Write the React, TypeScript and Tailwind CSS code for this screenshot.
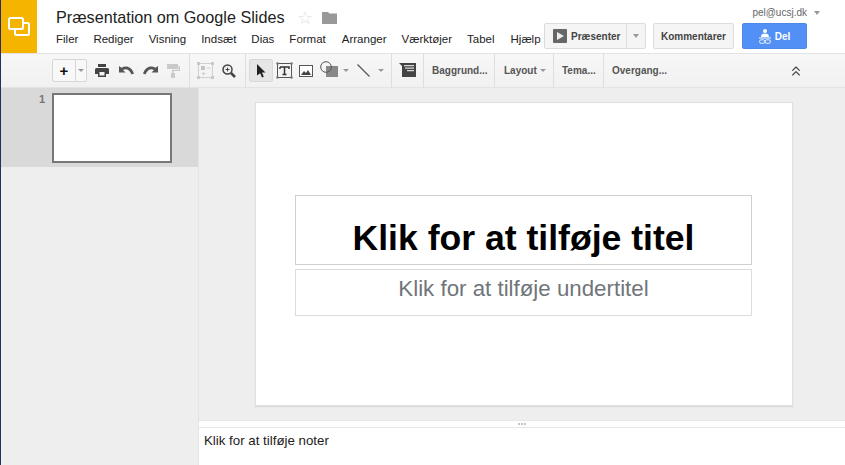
import { ChevronsUp } from 'lucide-react';

const menus: [string, string][] = [
  ['Filer', 'ml-0'],
  ['Rediger', 'ml-[15px]'],
  ['Visning', 'ml-[15px]'],
  ['Indsæt', 'ml-[15px]'],
  ['Dias', 'ml-[15px]'],
  ['Format', 'ml-[15px]'],
  ['Arranger', 'ml-[16px]'],
  ['Værktøjer', 'ml-[15px]'],
  ['Tabel', 'ml-[15px]'],
  ['Hjælp', 'ml-[16px]'],
];

const Caret = ({ className = '' }: { className?: string }) => (
  <span className={`w-0 h-0 border-x-[3px] border-x-transparent border-t-[3px] border-t-[#999] ${className}`} />
);

const Logo = () => (
  <svg width="22" height="20" viewBox="0 0 22 20" fill="none" stroke="#fff" strokeWidth="2">
    <rect x="1" y="1" width="14" height="11" rx="1.5" />
    <path d="M15 6h4.5a1.5 1.5 0 0 1 1.500 1.500v9a1.500 1.500 0 0 1-1.500 1.500h-11a1.500 1.500 0 0 1-1.500-1.500V12" />
  </svg>
);

const PrintIcon = () => (
  <svg width="14" height="13" viewBox="0 0 14 13" fill="#444">
    <path d="M3 0h8v3H3zM1.500 4h11A1.500 1.500 0 0 1 14 5.500V10h-3v3H3v-3H0V5.500A1.500 1.500 0 0 1 1.500 4zM4.500 8v3.500h5V8z" />
  </svg>
);

const UndoIcon = ({ flip = false }: { flip?: boolean }) => (
  <svg width="15" height="9" viewBox="0 0 15 9" fill="#555" className={flip ? '-scale-x-100' : ''}>
    <path d="M0 0v6.500h6.500L4 4c2.800-1.800 6.500-.8 8.500 4.500L15 7.500C12.800 1.200 7.500-1.200 2.500 1.700z" />
  </svg>
);

const PaintIcon = () => (
  <svg width="13" height="14" viewBox="0 0 13 14" fill="#c9c9c9">
    <path d="M0 0h11v5H0zM11.500 2H13v5H6.500v2H8v5H4V9h1V5.700h6.500z" />
  </svg>
);

const SelectBoxIcon = () => (
  <svg width="17" height="17" viewBox="0 0 17 17" fill="none" stroke="#cfcfcf">
    <rect x="1.500" y="1.500" width="14" height="14" />
    <rect x="0" y="0" width="3" height="3" fill="#c8c8c8" stroke="none" />
    <rect x="14" y="0" width="3" height="3" fill="#c8c8c8" stroke="none" />
    <rect x="0" y="14" width="3" height="3" fill="#c8c8c8" stroke="none" />
    <rect x="14" y="14" width="3" height="3" fill="#c8c8c8" stroke="none" />
    <rect x="4" y="4" width="4" height="4" fill="#c4c4c4" stroke="none" />
    <path d="M10 6h3.500M6.500 10v3.500M4.500 11.500h4" />
  </svg>
);

const ZoomIcon = () => (
  <svg width="14" height="14" viewBox="0 0 14 14" fill="none" stroke="#444">
    <circle cx="5.500" cy="5.500" r="4.500" strokeWidth="1.500" />
    <path d="M9 9l4 4" strokeWidth="2.500" />
    <path d="M3.500 5.500h4M5.500 3.500v4" />
  </svg>
);

const CursorIcon = () => (
  <svg width="10" height="14" viewBox="0 0 10 14" fill="#222">
    <path d="M1 0l8.500 8.500H6l1.800 4.200-1.800.8-1.800-4.300L1 11.500z" />
  </svg>
);

const TextBoxIcon = () => (
  <svg width="17" height="17" viewBox="0 0 17 17" fill="none">
    <rect x="1.500" y="1.500" width="14" height="14" stroke="#555" />
    <circle cx="1.500" cy="1.500" r="1.300" fill="#777" />
    <circle cx="15.500" cy="1.500" r="1.300" fill="#777" />
    <circle cx="1.500" cy="15.500" r="1.300" fill="#777" />
    <circle cx="15.500" cy="15.500" r="1.300" fill="#777" />
    <path d="M4 5h9v2M4 7V5M8.500 5v7.500M6.500 12.500h4" stroke="#333" strokeWidth="1.500" />
  </svg>
);

const ImageIcon = () => (
  <svg width="14" height="12" viewBox="0 0 14 12">
    <rect x=".5" y=".5" width="13" height="11" fill="#fff" stroke="#555" />
    <path d="M2 10l3-4 2 2 2-3 3 5z" fill="#444" />
  </svg>
);

const ShapeIcon = () => (
  <svg width="18" height="16" viewBox="0 0 18 16">
    <rect x="6" y="5" width="12" height="11" fill="#888" />
    <circle cx="6" cy="6" r="5.300" fill="none" stroke="#555" />
  </svg>
);

const LineIcon = () => (
  <svg width="13" height="13" viewBox="0 0 13 13" stroke="#555" strokeWidth="1.300">
    <path d="M.5.500l12 12" />
  </svg>
);

const NoteIcon = () => (
  <svg width="17" height="14" viewBox="0 0 17 14" fill="#444">
    <path d="M0 0h17v14H3V3z" />
    <path d="M5 2h10v1.200H5zM6 4.500h9v1.200H6zM8 7h7v1.200H8z" fill="#d8d8d8" />
  </svg>
);

const PersonLinkIcon = () => (
  <svg width="12" height="15" viewBox="0 0 12 15" fill="#fff">
    <circle cx="6" cy="2" r="2" />
    <path d="M2 8c0-2.500 1.500-3.500 4-3.500S10 5.500 10 8z" />
    <rect x="0" y="8.500" width="12" height="1" />
    <rect x=".5" y="10.800" width="5.500" height="3.500" rx="1.750" fill="none" stroke="#fff" strokeWidth=".9" />
    <rect x="6" y="10.800" width="5.500" height="3.500" rx="1.750" fill="none" stroke="#fff" strokeWidth=".9" />
  </svg>
);

const Divider = () => <div className="w-px h-[34px] bg-[#dedede]" />;

const App = () => {
  return (
    <div className="w-[845px] h-[465px] overflow-hidden flex flex-col bg-white border-l border-l-[#22325c] font-['Liberation_Sans',Arial,sans-serif]">
      {/* Header */}
      <header className="h-[53px] flex shrink-0">
        <div className="w-[36px] h-[53px] bg-[#f4b400] flex items-center justify-center">
          <Logo />
        </div>
        <div className="ml-[19px] pt-[7px] w-[488px]">
          <div className="flex items-center h-[21px]">
            <span className="text-[16.200px] leading-[21px] text-[#222]">Præsentation om Google Slides</span>
            <span className="ml-[12px] text-[18px] leading-[18px] text-[#e2e2e2]">☆</span>
            <svg className="ml-[9px]" width="15" height="12" viewBox="0 0 15 12" fill="#999">
              <path d="M0 0h6l1.500 1.500H15V12H0z" />
            </svg>
          </div>
          <nav className="flex mt-[3px] text-[11.500px] leading-[16px] text-[#222]">
            {menus.map(([label, gap]) => (
              <span key={label} className={gap}>{label}</span>
            ))}
          </nav>
        </div>
        <div className="flex-1 flex flex-col items-end relative">
          <div className="absolute right-[25px] top-[7px] flex items-center text-[10px] leading-[12px] text-[#666]">
            pel@ucsj.dk
            <Caret className="ml-[7px] border-x-[3.500px] border-t-[4px] border-t-[#777]" />
          </div>
          <div className="flex mt-[23px] mr-[38px] h-[26px] text-[10px] font-bold">
            <div className="flex items-center w-[102px] border border-[#dcdcdc] rounded-[2px] bg-[#f5f5f5] text-[#444]">
              <span className="ml-[8px] w-[14px] h-[14px] bg-[#666] flex items-center justify-center rounded-[1px]">
                <span className="w-0 h-0 border-y-[4px] border-y-transparent border-l-[7px] border-l-[#eee] ml-[1px]" />
              </span>
              <span className="ml-[4px]">Præsenter</span>
              <span className="ml-[6px] h-full w-px bg-[#dcdcdc]" />
              <Caret className="ml-[6px] border-x-[3.500px] border-t-[4px]" />
            </div>
            <div className="ml-[7px] w-[81px] flex items-center justify-center border border-[#dcdcdc] rounded-[2px] bg-[#f5f5f5] text-[#444]">
              Kommentarer
            </div>
            <div className="ml-[8px] w-[65px] flex items-center justify-center gap-[4px] rounded-[2px] bg-[#5390f5] border border-[#4d87e8] text-white">
              <PersonLinkIcon />
              Del
            </div>
          </div>
        </div>
      </header>

      {/* Toolbar */}
      <div className="h-[35px] shrink-0 border-y border-[#e3e3e3] bg-gradient-to-b from-[#f7f7f7] to-[#f1f1f1] flex items-center">
        <div className="ml-[51px] h-[23px] w-[35px] flex border border-[#d6d6d6] rounded-[2px] bg-[#f8f8f8]">
          <span className="w-[22px] flex items-center justify-center text-[15px] leading-none font-bold text-[#111]">+</span>
          <span className="flex-1 border-l border-[#d6d6d6] flex items-center justify-center"><Caret /></span>
        </div>
        <div className="ml-[8px] flex items-center"><PrintIcon /></div>
        <div className="ml-[10px] flex items-center"><UndoIcon /></div>
        <div className="ml-[9px] flex items-center"><UndoIcon flip /></div>
        <div className="ml-[9px] flex items-center"><PaintIcon /></div>
        <div className="ml-[9px]"><Divider /></div>
        <div className="ml-[7px]"><SelectBoxIcon /></div>
        <div className="ml-[8px]"><ZoomIcon /></div>
        <div className="ml-[9px]"><Divider /></div>
        <div className="ml-[3px] w-[24px] h-[23px] rounded-[2px] bg-[#e6e6e6] border border-[#d8d8d8] flex items-center justify-center">
          <CursorIcon />
        </div>
        <div className="ml-[3px]"><TextBoxIcon /></div>
        <div className="ml-[6px]"><ImageIcon /></div>
        <div className="ml-[7px] -mt-[3px]"><ShapeIcon /></div>
        <Caret className="ml-[5px]" />
        <div className="ml-[8px]"><LineIcon /></div>
        <Caret className="ml-[8px]" />
        <div className="ml-[7px]"><Divider /></div>
        <div className="ml-[7px] -mt-[2px]"><NoteIcon /></div>
        <div className="ml-[7px]"><Divider /></div>
        <span className="ml-[8px] w-[62px] text-[10px] font-bold text-[#555]">Baggrund...</span>
        <Divider />
        <span className="ml-[9px] flex items-center w-[49px] text-[10px] font-bold text-[#555]">
          Layout
          <Caret className="ml-[3px]" />
        </span>
        <Divider />
        <span className="ml-[8px] w-[41px] text-[10px] font-bold text-[#555]">Tema...</span>
        <Divider />
        <span className="ml-[8px] text-[10px] font-bold text-[#555]">Overgang...</span>
        <ChevronsUp className="ml-[121px]" size={16} color="#444" strokeWidth={1.750} />
      </div>

      {/* Main */}
      <div className="flex flex-1 min-h-0">
        <aside className="w-[198px] shrink-0 bg-[#eeeeee] border-r border-[#e4e4e4]">
          <div className="h-[79px] bg-[#d9d9d9] flex pt-[5px]">
            <span className="ml-[38px] text-[11px] leading-[12px] font-bold text-[#777]">1</span>
            <div className="ml-[7px] w-[120px] h-[70px] bg-white border-2 border-[#777]" />
          </div>
        </aside>
        <div className="flex-1 flex flex-col min-w-0">
          <div className="h-[332px] bg-[#eeeeee] pt-[14px] pl-[56px]">
            <div className="w-[538px] h-[304px] bg-white border border-[#e0e0e0] pl-[39px] pt-[92px] shadow-[0_1px_1px_#dcdcdc]">
              <div className="w-[457px] h-[70px] border border-[#cfcfcf] flex items-end justify-center pb-[5px]">
                <span className="text-[35.600px] leading-[42px] font-bold text-black">Klik for at tilføje titel</span>
              </div>
              <div className="mt-[4px] w-[457px] h-[47px] border border-[#dcdcdc] flex justify-center pt-[5px]">
                <span className="text-[22.300px] leading-[28px] text-[#70757a]">Klik for at tilføje undertitel</span>
              </div>
            </div>
          </div>
          <div className="h-[8px] bg-white border-y border-[#e8e8e8] flex items-center justify-center gap-px">
            <span className="w-[2px] h-[2px] bg-[#c4c4c4]" />
            <span className="w-[2px] h-[2px] bg-[#c4c4c4]" />
            <span className="w-[2px] h-[2px] bg-[#c4c4c4]" />
          </div>
          <div className="flex-1 bg-white pl-[5px] pt-[5px] text-[13.300px] leading-[16px] text-[#222]">
            Klik for at tilføje noter
          </div>
        </div>
      </div>
    </div>
  );
};

export default App;
